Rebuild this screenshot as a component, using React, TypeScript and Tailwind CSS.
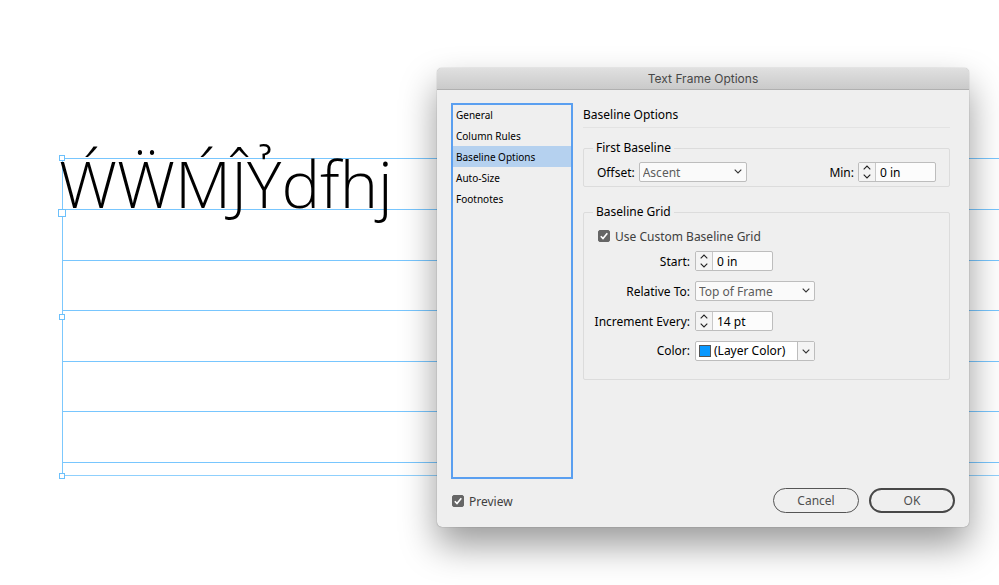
import { useState } from "react";
import type { ReactNode } from "react";
import clsx from "clsx";

const sections = ["General", "Column Rules", "Baseline Options", "Auto-Size", "Footnotes"];

/* distance between baselines of the text frame */
const gridRows = ["h-[51px]", "h-[51px]", "h-[50px]", "h-[51px]", "h-[50px]", "h-[51px]", "h-[13px]"];

function Chevron({ up = false, className = "" }: { up?: boolean; className?: string }) {
  return (
    <svg viewBox="0 0 8 5" className={clsx("w-2 h-[5px]", className)} fill="none" stroke="currentColor" strokeWidth="1.1">
      <path d={up ? "M0.7 4.3 4 1l3.3 3.3" : "M0.7 0.7 4 4l3.3-3.3"} />
    </svg>
  );
}

function CheckBox({ id, label, checked, onChange, className = "" }: {
  id: string;
  label: string;
  checked: boolean;
  onChange: (v: boolean) => void;
  className?: string;
}) {
  return (
    <div className={clsx("flex items-center gap-[5px] text-[#404040]", className)}>
      <span className="relative flex">
        <input
          id={id}
          type="checkbox"
          checked={checked}
          onChange={e => onChange(e.target.checked)}
          className="peer appearance-none size-3 rounded-[2px] border border-[#666] bg-white checked:bg-[#666]"
        />
        <svg viewBox="0 0 12 12" className="absolute inset-0 size-3 pointer-events-none hidden peer-checked:block" fill="none" stroke="#fff" strokeWidth="1.6">
          <path d="M2.8 6.2 5 8.6l4.3-5.4" />
        </svg>
      </span>
      <label htmlFor={id} className="pt-0.5">{label}</label>
    </div>
  );
}

function Stepper({ id, value }: { id: string; value: string }) {
  return (
    <div className="flex w-[78px] h-5 rounded-[2px] border border-[#bdbdbd] bg-[#fcfcfc] overflow-hidden">
      <div className="flex flex-col w-[17px] border-r border-[#c8c8c8] bg-[#f4f4f4] text-[#222]">
        <button type="button" aria-label="Increase" className="flex flex-1 items-center justify-center">
          <Chevron up />
        </button>
        <button type="button" aria-label="Decrease" className="flex flex-1 items-center justify-center">
          <Chevron />
        </button>
      </div>
      <input id={id} defaultValue={value} className="min-w-0 flex-1 pl-1 pt-0.5 text-black outline-none" />
    </div>
  );
}

function Select({ id, value, className = "" }: { id: string; value: string; className?: string }) {
  return (
    <div className={clsx("relative h-5 text-[#5c5c5c]", className)}>
      <select id={id} className="appearance-none w-full h-full pl-[3px] pt-0.5 rounded-[2px] border border-[#bdbdbd] bg-[#fafafa] outline-none">
        <option>{value}</option>
      </select>
      <Chevron className="absolute right-[5px] top-[7px] pointer-events-none text-[#333]" />
    </div>
  );
}

function ColorSelect({ id }: { id: string }) {
  return (
    <div className="relative w-[120px] h-5">
      <select id={id} className="appearance-none w-full h-full pl-[18px] rounded-[2px] border border-[#bdbdbd] bg-white outline-none">
        <option>(Layer Color)</option>
      </select>
      <span className="absolute left-1 top-1 size-3 border border-[#555] bg-[#0a99ff] pointer-events-none" />
      <span className="absolute right-px top-px bottom-px w-[17px] flex items-center justify-center border-l border-[#bdbdbd] bg-[#f4f4f4] text-[#333] pointer-events-none">
        <Chevron />
      </span>
    </div>
  );
}

function Group({ title, className, children }: { title: string; className: string; children: ReactNode }) {
  return (
    <fieldset className={clsx("rounded-[2px] border border-[#dcdcdc]", className)}>
      <legend className="ml-[9px] px-[3px] h-4 leading-4">{title}</legend>
      {children}
    </fieldset>
  );
}

function Handle({ className }: { className: string }) {
  return <span className={clsx("absolute border border-[#6cc0fb] bg-white", className)} />;
}

function TextFrame() {
  return (
    <div className="relative ml-[62px] border-l border-[#7cc8fd]">
      {gridRows.map((h, i) => (
        <div key={i} className={clsx(h, "border-t border-[#78c6fe]")}>
          {i === 0 && (
            <p className="-ml-1 w-max font-['Open_Sans','Noto_Sans',sans-serif] font-light text-[65px] leading-[48px] text-black">
              ẂẄḾĴỶdfhj
            </p>
          )}
        </div>
      ))}
      <div className="border-t border-[#8fd0fd]" />
      <Handle className="size-1.5 -left-1 -top-[3px]" />
      <Handle className="size-2 -left-[5px] top-[51px]" />
      <Handle className="size-1.5 -left-1 top-[156px]" />
      <Handle className="size-1.5 -left-1 -bottom-[3px]" />
    </div>
  );
}

function OptionsDialog() {
  const [section, setSection] = useState("Baseline Options");
  const [preview, setPreview] = useState(true);
  const [custom, setCustom] = useState(true);

  return (
    <section
      role="dialog"
      aria-labelledby="dialog-title"
      className="absolute left-[437px] top-[68px] w-[532px] rounded-[5px] bg-[#efefef] font-['Noto_Sans','Open_Sans',sans-serif] text-[12px] leading-4 text-black overflow-hidden shadow-[0_0_1px_rgba(0,0,0,0.5),0_18px_36px_rgba(0,0,0,0.4)]"
    >
      <h1
        id="dialog-title"
        className="h-[22px] border-b border-[#b0b0b0] bg-linear-to-b from-[#e0e0e0] to-[#cacaca] text-center font-['Inter',sans-serif] text-[12px] leading-[22px] text-[#474747]"
      >
        Text Frame Options
      </h1>

      <div className="px-3.5 pt-[13px] pb-3.5">
        <div className="flex gap-2.5">
          <ul className="w-[122px] h-[376px] border-2 border-t border-[#5a9ff0] shadow-[inset_0_1px_#5a9ff0] text-[10px]">
            {sections.map(s => (
              <li key={s}>
                <button
                  type="button"
                  onClick={() => setSection(s)}
                  className={clsx("block w-full h-[21px] pl-[3px] text-left", section === s && "bg-[#b5d1ef]")}
                >
                  {s}
                </button>
              </li>
            ))}
          </ul>

          <div className="flex-1 pt-1 mr-[5px]">
            <h2 className="pb-1 border-b border-[#e3e3e3]">{section}</h2>

            <Group title="First Baseline" className="mt-3 pb-1">
              <div className="flex items-center justify-between pt-1.5 px-[13px]">
                <div className="flex items-center gap-1">
                  <label htmlFor="offset" className="pt-0.5">Offset:</label>
                  <Select id="offset" value="Ascent" className="w-[108px]" />
                </div>
                <div className="flex items-center gap-1">
                  <label htmlFor="min" className="pt-0.5">Min:</label>
                  <Stepper id="min" value="0 in" />
                </div>
              </div>
            </Group>

            <Group title="Baseline Grid" className="mt-[17px] pb-[18px]">
              <CheckBox id="custom" label="Use Custom Baseline Grid" checked={custom} onChange={setCustom} className="mt-[7px] ml-3.5" />
              <div className="mt-1.5 ml-1 grid grid-cols-[102px_1fr] items-center gap-x-[5px] gap-y-2.5">
                <label htmlFor="start" className="pt-0.5 text-right">Start:</label>
                <Stepper id="start" value="0 in" />
                <label htmlFor="relative" className="pt-0.5 text-right">Relative To:</label>
                <Select id="relative" value="Top of Frame" className="w-[120px]" />
                <label htmlFor="increment" className="pt-0.5 text-right">Increment Every:</label>
                <Stepper id="increment" value="14 pt" />
                <label htmlFor="color" className="text-right">Color:</label>
                <ColorSelect id="color" />
              </div>
            </Group>
          </div>
        </div>

        <div className="mt-[9px] flex items-center gap-2.5">
          <CheckBox id="preview" label="Preview" checked={preview} onChange={setPreview} className="mr-auto pl-px" />
          <button type="button" className="w-[86px] h-[25px] rounded-full border border-[#555] text-[#4f4f4f]">
            Cancel
          </button>
          <button type="button" className="w-[86px] h-[25px] rounded-full border-2 border-[#484848] text-[#4f4f4f]">
            OK
          </button>
        </div>
      </div>
    </section>
  );
}

export default function App() {
  return (
    <main className="relative min-h-screen overflow-hidden bg-white pt-[158px]">
      <TextFrame />
      <OptionsDialog />
    </main>
  );
}
